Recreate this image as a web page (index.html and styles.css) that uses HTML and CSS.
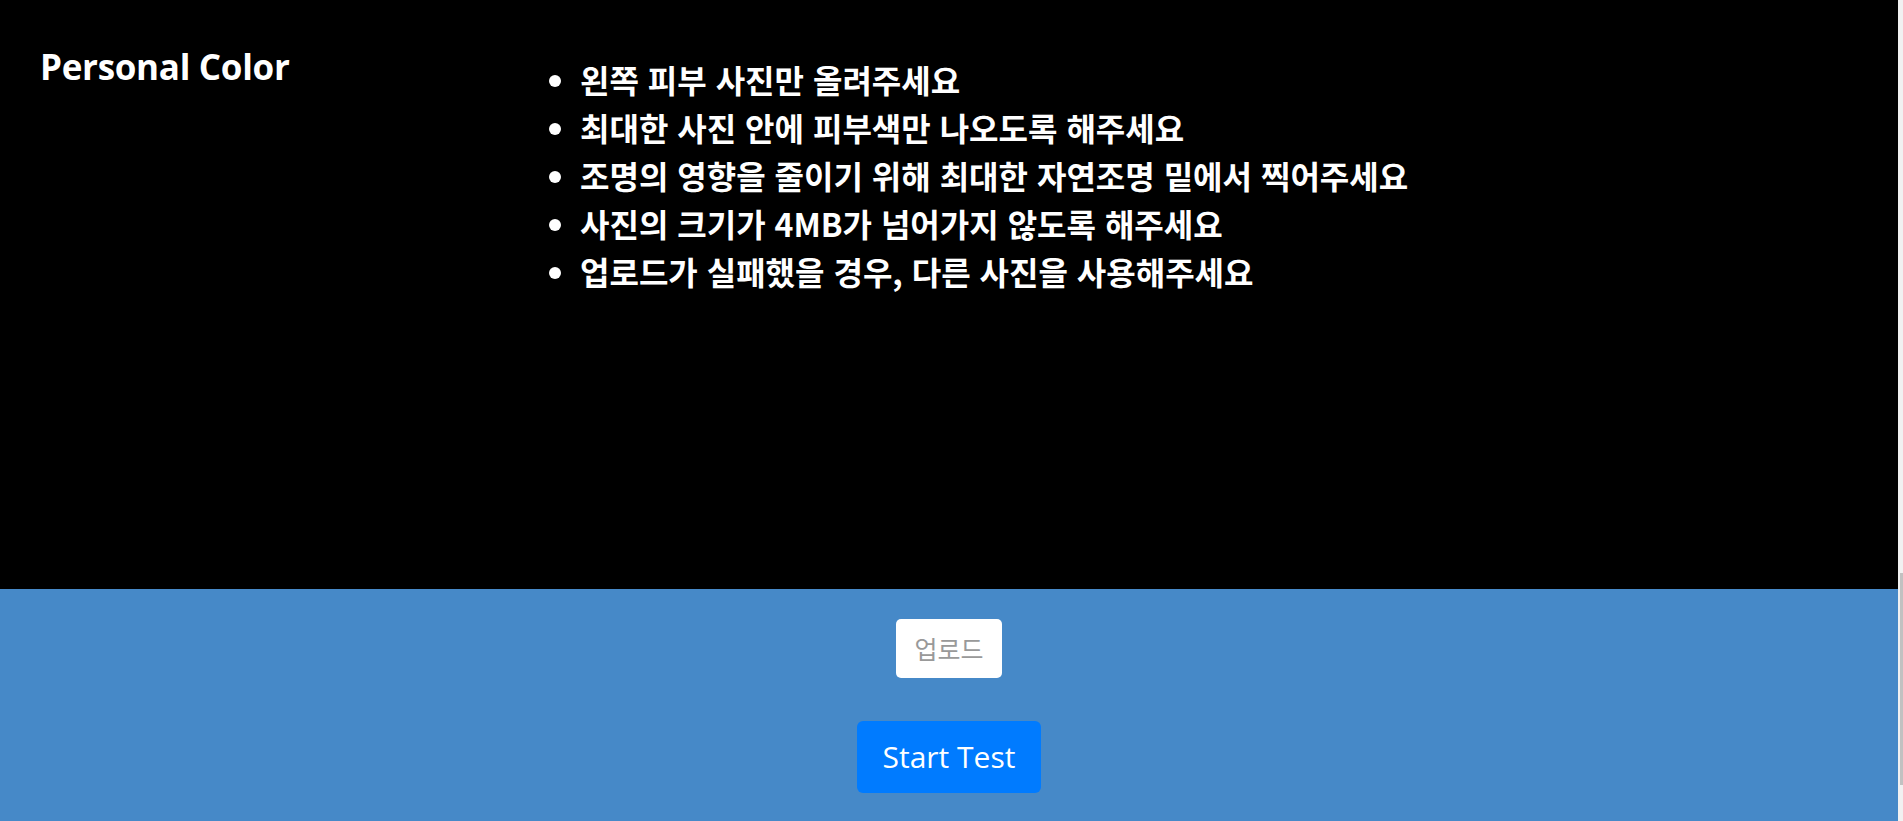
FILE: index.html
```html
<!DOCTYPE html>
<html lang="ko">
<head>
    <meta charset="UTF-8">
    <meta name="viewport" content="width=device-width, initial-scale=1.0">
    <title>Personal Color</title>
    <link rel="stylesheet" href="styles.css">
</head>
<body>
    <div class="page">
        <section class="intro">
            <h1 class="title">Personal Color</h1>
            <ul class="guide">
                <li>왼쪽 피부 사진만 올려주세요</li>
                <li>최대한 사진 안에 피부색만 나오도록 해주세요</li>
                <li>조명의 영향을 줄이기 위해 최대한 자연조명 밑에서 찍어주세요</li>
                <li>사진의 크기가 4MB가 넘어가지 않도록 해주세요</li>
                <li>업로드가 실패했을 경우, 다른 사진을 사용해주세요</li>
            </ul>
        </section>

        <section class="upload">
            <label class="upload-btn" for="photo">업로드</label>
            <input type="file" id="photo" class="file-input" accept="image/*">
            <button class="start-btn">Start Test</button>
        </section>
    </div>
    <div class="scroll-track"><div class="scroll-thumb"></div></div>
</body>
</html>
```

FILE: styles.css
```css
* {
    margin: 0;
    padding: 0;
    box-sizing: border-box;
}
body {
    display: flex;
    height: 100vh;
    overflow: hidden;
    background: #4689c8;
    font-family: 'Open Sans', 'Noto Sans CJK KR', sans-serif;
}
.page {
    flex: 1;
    display: flex;
    flex-direction: column;
}
.intro {
    background: #000;
    height: 589px;
    display: grid;
    grid-template-columns: 500px 1fr;
    padding-left: 40px;
    color: white;
}
.title {
    font-size: 35px;
    font-weight: 700;
    margin-top: 43px;
    letter-spacing: -0.3px;
}
.guide {
    margin-top: 55px;
    padding-left: 40px;
    font-family: 'Noto Sans CJK KR', sans-serif;
    font-size: 32px;
    font-weight: 700;
    line-height: 48px;
}
.upload {
    display: flex;
    flex-direction: column;
    align-items: center;
    padding-top: 30px;
    gap: 43px;
}
.upload-btn {
    display: block;
    background: white;
    color: #999;
    font-family: 'Noto Sans CJK KR', sans-serif;
    font-size: 25px;
    line-height: 33px;
    padding: 13px 18px;
    border-radius: 5px;
    cursor: pointer;
}
.file-input {
    display: none;
}
.start-btn {
    background: #007bff;
    color: white;
    border: none;
    border-radius: 6px;
    font-family: 'Open Sans', sans-serif;
    font-size: 30px;
    line-height: 42px;
    padding: 15px 26px;
    cursor: pointer;
}
.start-btn:hover {
    background: #0069d9;
}
.scroll-track {
    width: 5px;
    background: #f1f1f1;
}
.scroll-thumb {
    width: 3px;
    height: 212px;
    margin: 573px 0 0 2px;
    background: #c1c1c1;
}
```
